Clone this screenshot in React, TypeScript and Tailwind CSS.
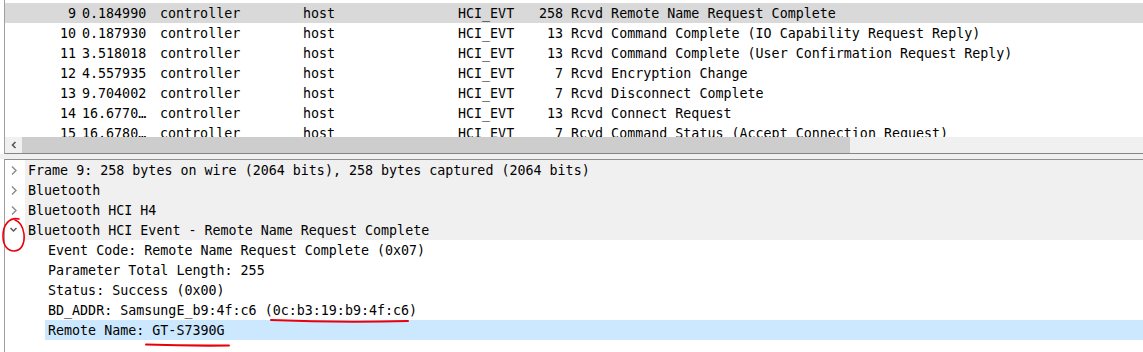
import React from 'react';

type Packet = { no: number; time: string; src: string; dst: string; proto: string; len: number; info: string };

const packets: Packet[] = [
  { no: 9, time: '0.184990', src: 'controller', dst: 'host', proto: 'HCI_EVT', len: 258, info: 'Rcvd Remote Name Request Complete' },
  { no: 10, time: '0.187930', src: 'controller', dst: 'host', proto: 'HCI_EVT', len: 13, info: 'Rcvd Command Complete (IO Capability Request Reply)' },
  { no: 11, time: '3.518018', src: 'controller', dst: 'host', proto: 'HCI_EVT', len: 13, info: 'Rcvd Command Complete (User Confirmation Request Reply)' },
  { no: 12, time: '4.557935', src: 'controller', dst: 'host', proto: 'HCI_EVT', len: 7, info: 'Rcvd Encryption Change' },
  { no: 13, time: '9.704002', src: 'controller', dst: 'host', proto: 'HCI_EVT', len: 7, info: 'Rcvd Disconnect Complete' },
  { no: 14, time: '16.6770…', src: 'controller', dst: 'host', proto: 'HCI_EVT', len: 13, info: 'Rcvd Connect Request' },
  { no: 15, time: '16.6780…', src: 'controller', dst: 'host', proto: 'HCI_EVT', len: 7, info: 'Rcvd Command Status (Accept Connection Request)' },
];

const treeTop = [
  { text: 'Frame 9: 258 bytes on wire (2064 bits), 258 bytes captured (2064 bits)', open: false },
  { text: 'Bluetooth', open: false },
  { text: 'Bluetooth HCI H4', open: false },
  { text: 'Bluetooth HCI Event - Remote Name Request Complete', open: true },
];

const children = [
  'Event Code: Remote Name Request Complete (0x07)',
  'Parameter Total Length: 255',
  'Status: Success (0x00)',
  'BD_ADDR: SamsungE_b9:4f:c6 (0c:b3:19:b9:4f:c6)',
  'Remote Name: GT-S7390G',
];

const Chevron = ({ open }: { open: boolean }) =>
  open ? (
    <svg width="20" height="20" viewBox="0 0 20 20">
      <polyline points="5.5,8 8.5,11 11.5,8" fill="none" stroke="#5a5a5a" strokeWidth="1.5" />
    </svg>
  ) : (
    <svg width="20" height="20" viewBox="0 0 20 20">
      <polyline points="7,6.5 11,10.5 7,14.5" fill="none" stroke="#8a8a8a" strokeWidth="1.4" />
    </svg>
  );

export default function App() {
  return (
    <div
      className="relative w-[1143px] h-[352px] bg-white text-black text-[13.33px] leading-[20px] overflow-hidden"
      style={{ fontFamily: '"DejaVu Sans Mono", "Liberation Mono", monospace' }}
    >
      {/* packet list */}
      <div className="ml-[4px] border-l border-[#a0a0a0] border-b border-b-[#858585]">
        <div className="h-[137px] overflow-hidden pt-[3px]">
          {packets.map((p, i) => (
            <div key={p.no} className={`flex h-[20px] pt-[1px] overflow-hidden whitespace-pre ${i === 0 ? 'bg-[#d9d9d9]' : ''}`}>
              <span className="w-[71px] text-right">{p.no}</span>
              <span className="ml-[6px] w-[78px]">{p.time}</span>
              <span className="w-[143px]">{p.src}</span>
              <span className="w-[155px]">{p.dst}</span>
              <span className="w-[65px]">{p.proto}</span>
              <span className="w-[40px] text-right">{p.len}</span>
              <span className="ml-[8px]">{p.info}</span>
            </div>
          ))}
        </div>
        <div className="flex h-[16px] bg-[#f0f0f0]">
          <div className="w-[17px] flex items-center justify-center">
            <svg width="8" height="10" viewBox="0 0 8 10">
              <polyline points="5.5,2 2.5,5 5.5,8" fill="none" stroke="#505050" strokeWidth="1.5" />
            </svg>
          </div>
          <div className="w-[828px] bg-[#cdcdcd]" />
        </div>
      </div>

      {/* splitter */}
      <div className="h-[5px] bg-[#f0f0f0]" />

      {/* packet details */}
      <div className="ml-[4px] border-l border-[#a0a0a0] border-t border-t-[#8f8f8f] h-[200px]">
        {treeTop.map((t) => (
          <div key={t.text} className="flex h-[20px]">
            <div className="w-[20px] h-[20px] bg-white">
              <Chevron open={t.open} />
            </div>
            <div className="flex-1 h-[20px] pt-[1px] overflow-hidden bg-[#f0f0f0] pl-[3px] whitespace-pre">{t.text}</div>
          </div>
        ))}
        {children.map((c, i) => (
          <div key={c} className="flex h-[20px] pl-[40px]">
            <div
              className={`flex-1 h-[20px] pt-[1px] overflow-hidden pl-[3px] whitespace-pre ${i === children.length - 1 ? 'bg-[#cce8ff]' : ''}`}
            >
              {c}
            </div>
          </div>
        ))}
      </div>

      {/* red annotations */}
      <svg className="absolute left-0 top-0 pointer-events-none" width="1143" height="352" viewBox="0 0 1143 352">
        <path
          d="M19 219 C9 217, 3 225, 3 236 C3 246, 8 251, 14 251 C21 251, 25 244, 24 234 C23 227, 21 222, 15 220"
          fill="none"
          stroke="#e8000b"
          strokeWidth="1.6"
          strokeLinecap="round"
        />
        <path d="M271 320 Q340 323 408 321" fill="none" stroke="#e8000b" strokeWidth="2" strokeLinecap="round" />
        <path d="M146 344.5 Q188 346 229 345.5" fill="none" stroke="#e8000b" strokeWidth="2" strokeLinecap="round" />
      </svg>
    </div>
  );
}
